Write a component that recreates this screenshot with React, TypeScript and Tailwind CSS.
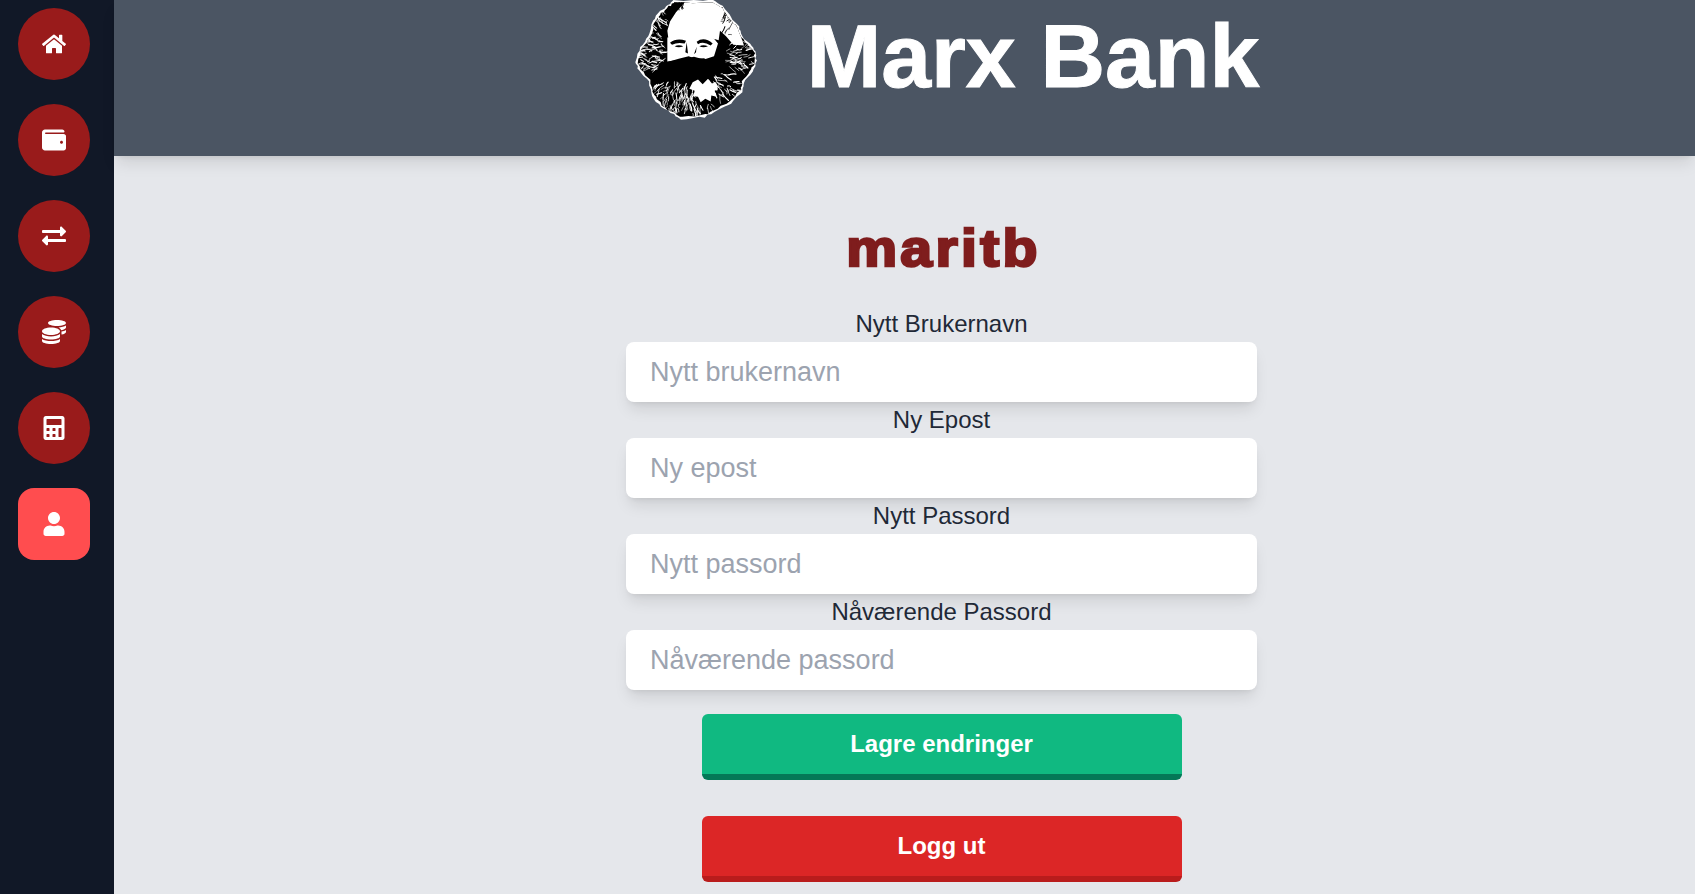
import { useMemo } from "react";
import { FaCalculator, FaCoins, FaExchangeAlt, FaHome, FaUser, FaWallet } from "react-icons/fa";

const navItems = [
  { icon: FaHome, active: false },
  { icon: FaWallet, active: false },
  { icon: FaExchangeAlt, active: false },
  { icon: FaCoins, active: false },
  { icon: FaCalculator, active: false },
  { icon: FaUser, active: true },
];

const fields = [
  { label: "Nytt Brukernavn", placeholder: "Nytt brukernavn", type: "text" },
  { label: "Ny Epost", placeholder: "Ny epost", type: "email" },
  { label: "Nytt Passord", placeholder: "Nytt passord", type: "password" },
  { label: "Nåværende Passord", placeholder: "Nåværende passord", type: "password" },
];

const outline = [
  [172, 14], [190, 0], [305, 0], [338, 18], [362, 52], [384, 78], [395, 110], [424, 138], [437, 160], [436, 190],
  [424, 216], [400, 246], [394, 274], [362, 308], [322, 330], [284, 350], [212, 358], [190, 344], [150, 320],
  [124, 288], [114, 244], [84, 210], [75, 186], [90, 140], [114, 110], [128, 62], [148, 34],
];

// hair regions of the portrait: [x, y, radius x, radius y, count, colour]
const hairPatches: [number, number, number, number, number, string][] = [
  [125, 150, 46, 62, 105, "#fff"],
  [150, 60, 26, 30, 24, "#fff"],
  [385, 165, 44, 46, 55, "#fff"],
  [352, 84, 24, 42, 16, "#000"],
  [185, 285, 66, 46, 95, "#fff"],
  [335, 255, 50, 40, 45, "#fff"],
  [265, 322, 46, 22, 24, "#fff"],
  [205, 18, 24, 12, 18, "#000"],
];

function MarxPortrait() {
  const { strands, edge, inner } = useMemo(() => {
    let seed = 11;
    const rnd = () => {
      seed = (seed * 16807) % 2147483647;
      return seed / 2147483647;
    };
    const jag = (shrink: number, amount: number) => {
      let d = "";
      outline.forEach(([x, y], i) => {
        const [nx, ny] = outline[(i + 1) % outline.length];
        for (let t = 0; t < 4; t++) {
          const px = x + ((nx - x) * t) / 4;
          const py = y + ((ny - y) * t) / 4;
          const k = 1 - shrink / Math.hypot(px - 255, py - 175);
          const qx = 255 + (px - 255) * k + (rnd() - 0.5) * amount;
          const qy = 175 + (py - 175) * k + (rnd() - 0.5) * amount;
          d += `${d ? "L" : "M"}${qx.toFixed(1)} ${qy.toFixed(1)}`;
        }
      });
      return d + "Z";
    };
    const out: { d: string; color: string; w: number }[] = [];
    for (const [cx, cy, rx, ry, count, color] of hairPatches) {
      for (let i = 0; i < count; i++) {
        const a = rnd() * Math.PI * 2;
        const r = Math.sqrt(rnd());
        const x = cx + Math.cos(a) * r * rx;
        const y = cy + Math.sin(a) * r * ry;
        const dir = Math.atan2(y - 170, x - 240) + (rnd() - 0.5) * 1.3;
        const len = 8 + rnd() * 18;
        const x2 = x + Math.cos(dir) * len;
        const y2 = y + Math.sin(dir) * len;
        const mx = (x + x2) / 2 + (rnd() - 0.5) * 8;
        const my = (y + y2) / 2 + (rnd() - 0.5) * 8;
        out.push({
          d: `M${x.toFixed(1)} ${y.toFixed(1)}Q${mx.toFixed(1)} ${my.toFixed(1)} ${x2.toFixed(1)} ${y2.toFixed(1)}`,
          color,
          w: 1.4 + rnd() * 2,
        });
      }
    }
    return { strands: out, edge: jag(0, 5), inner: jag(6, 6) };
  }, []);

  return (
    <svg viewBox="70 0 372 362" className="h-[121px] w-[124px] shrink-0 self-start" aria-label="Karl Marx">
      <defs>
        <clipPath id="head">
          <path d={inner} />
        </clipPath>
      </defs>
      <path fill="#fff" d={edge} />
      <path fill="#000" d={inner} />
      <g clipPath="url(#head)">
        {/* light top of the hair and forehead */}
        <path
          fill="#fff"
          d="M178 64 196 36 226 2 302 0 342 28 382 84 400 136 368 134 346 108 328 92 324 120 296 112 258 116 226 120 174 122 170 92Z"
        />
        <g fill="none" strokeLinecap="round">
          {strands.map((s, i) => (
            <path key={i} d={s.d} stroke={s.color} strokeWidth={s.w} />
          ))}
        </g>
        {/* cheeks and nose */}
        <path fill="#fff" d="M170 112 304 108 322 130 310 168 280 178 250 170 212 178 170 184Z" />
        {/* brows and eyes */}
        <path fill="#000" d="M178 128Q198 112 226 122L222 130Q200 125 184 134ZM258 125Q280 108 306 130L300 136Q278 122 262 132Z" />
        <path fill="#000" d="M192 138Q204 133 218 138 204 144 192 138ZM266 138Q278 133 292 138 278 144 266 138Z" />
        <path fill="#000" d="M228 126 224 156 232 160ZM258 140 256 156 250 162Z" />
        {/* moustache with a ragged lower edge */}
        <path
          fill="#000"
          d="M140 206 168 186 204 176 234 168 254 176 280 174 306 188 334 214 322 232 312 222 304 246 288 232 272 250 256 234 240 252 226 236 210 254 196 238 180 256 168 236 152 244Z"
        />
        {/* light centre of the beard */}
        <path
          fill="#fff"
          d="M246 246 262 238 276 252 292 236 304 250 316 246 322 268 312 272 318 290 302 286 300 304 284 296 270 306 262 290 248 288 252 272 236 266Z"
        />
      </g>
    </svg>
  );
}

export default function App() {
  return (
    <div className="flex h-screen overflow-hidden bg-[#e5e7eb] font-['Liberation_Sans',Arial,sans-serif]">
      <nav className="flex w-[114px] shrink-0 flex-col gap-6 bg-[#111827] px-[18px] pt-2">
        {navItems.map(({ icon: Icon, active }, i) => (
          <button
            key={i}
            className={
              active
                ? "flex h-[72px] w-[72px] items-center justify-center rounded-2xl bg-[#ff4d4f] text-2xl text-white"
                : "flex h-[72px] w-[72px] items-center justify-center rounded-full bg-[#991b1b] text-2xl text-white"
            }
          >
            <Icon />
          </button>
        ))}
      </nav>

      <div className="flex min-w-0 flex-1 flex-col">
        <header className="flex h-[156px] shrink-0 items-center justify-center gap-[49px] bg-[#4b5563] pl-[84px] shadow-lg">
          <MarxPortrait />
          <h1 className="-mt-[43px] text-[89.5px] leading-none font-bold text-white [-webkit-text-stroke:1px_#fff]">
            Marx Bank
          </h1>
        </header>

        <main className="flex flex-col items-center pl-[74px] pt-[62px] text-[#1f2937]">
          <h2 className="mb-[28px] ml-1 h-[60px] scale-x-110 text-[52px] leading-[60px] font-extrabold tracking-[3px] text-[#7f1d1d] [-webkit-text-stroke:2.5px_#7f1d1d]">
            maritb
          </h2>
          <form className="flex w-[631px] flex-col items-center">
            {fields.map((f) => (
              <label key={f.label} className="flex w-full flex-col items-center text-2xl leading-9">
                {f.label}
                <input
                  type={f.type}
                  placeholder={f.placeholder}
                  className="h-[60px] w-full rounded-lg bg-white px-6 text-[27px] shadow-lg outline-none placeholder:text-[#9ca3af]"
                />
              </label>
            ))}
            <button
              type="button"
              className="mt-6 h-[66px] w-[480px] rounded-md border-b-[6px] border-[#047857] bg-[#10b981] text-2xl font-bold text-white"
            >
              Lagre endringer
            </button>
            <button
              type="button"
              className="mt-9 h-[66px] w-[480px] rounded-md border-b-[6px] border-[#b91c1c] bg-[#dc2626] text-2xl font-bold text-white"
            >
              Logg ut
            </button>
          </form>
        </main>
      </div>
    </div>
  );
}
